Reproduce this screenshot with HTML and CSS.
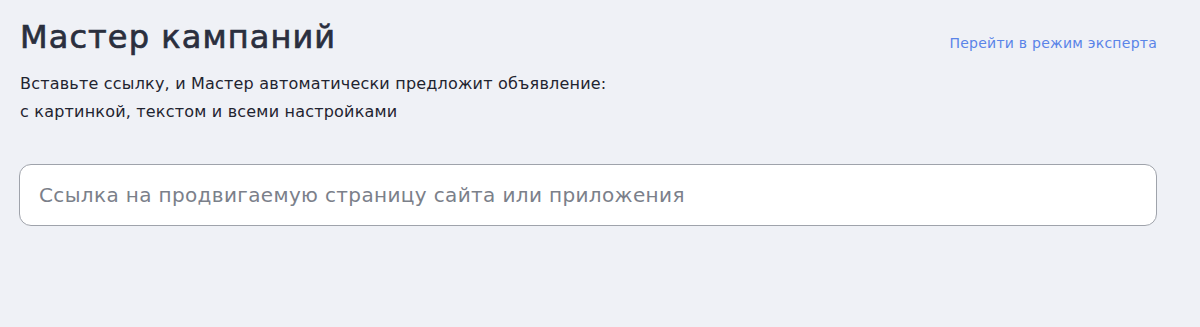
FILE: index.html
```html
<!DOCTYPE html>
<html lang="ru">
<head>
<meta charset="utf-8">
<link rel="stylesheet" href="styles.css">
</head>
<body>
<div class="page">
  <div class="header">
    <div class="intro">
      <h1 class="title">Мастер кампаний</h1>
      <p class="desc">Вставьте ссылку, и Мастер автоматически предложит объявление:<br>с картинкой, текстом и всеми настройками</p>
    </div>
    <a class="expert" href="#">Перейти в режим эксперта</a>
  </div>
  <div class="field">
    <input class="url" type="text" placeholder="Ссылка на продвигаемую страницу сайта или приложения">
  </div>
</div>
</body>
</html>
```
FILE: styles.css
```css
html, body {
  margin: 0;
  padding: 0;
  background: #eff1f6;
  font-family: "DejaVu Sans", "Noto Sans", sans-serif;
}
.page {
  width: 1138px;
  padding: 14px 0 0 19px;
}
.header {
  display: flex;
  justify-content: space-between;
  align-items: flex-start;
}
.title {
  margin: 0;
  font-size: 32px;
  font-weight: 400;
  letter-spacing: 1.1px;
  -webkit-text-stroke: 0.7px #2a2f3e;
  line-height: 46px;
  color: #2a2f3e;
  padding-left: 1px;
}
.desc {
  margin: 10px 0 0 0;
  font-size: 16px;
  letter-spacing: 0.2px;
  line-height: 28px;
  color: #1f2430;
  padding-left: 1px;
}
.expert {
  margin-top: 21px;
  font-size: 14px;
  letter-spacing: 0.25px;
  color: #5a84e8;
  text-decoration: none;
}
.field {
  margin-top: 38px;
}
.url {
  box-sizing: border-box;
  width: 100%;
  height: 62px;
  border: 1.5px solid #9fa3ab;
  border-radius: 12px;
  background: #fff;
  padding: 0 19px;
  font-family: inherit;
  font-size: 20px;
  letter-spacing: 0.36px;
  color: #1f2430;
  outline: none;
}
.url::placeholder {
  color: #7b808a;
}
```
